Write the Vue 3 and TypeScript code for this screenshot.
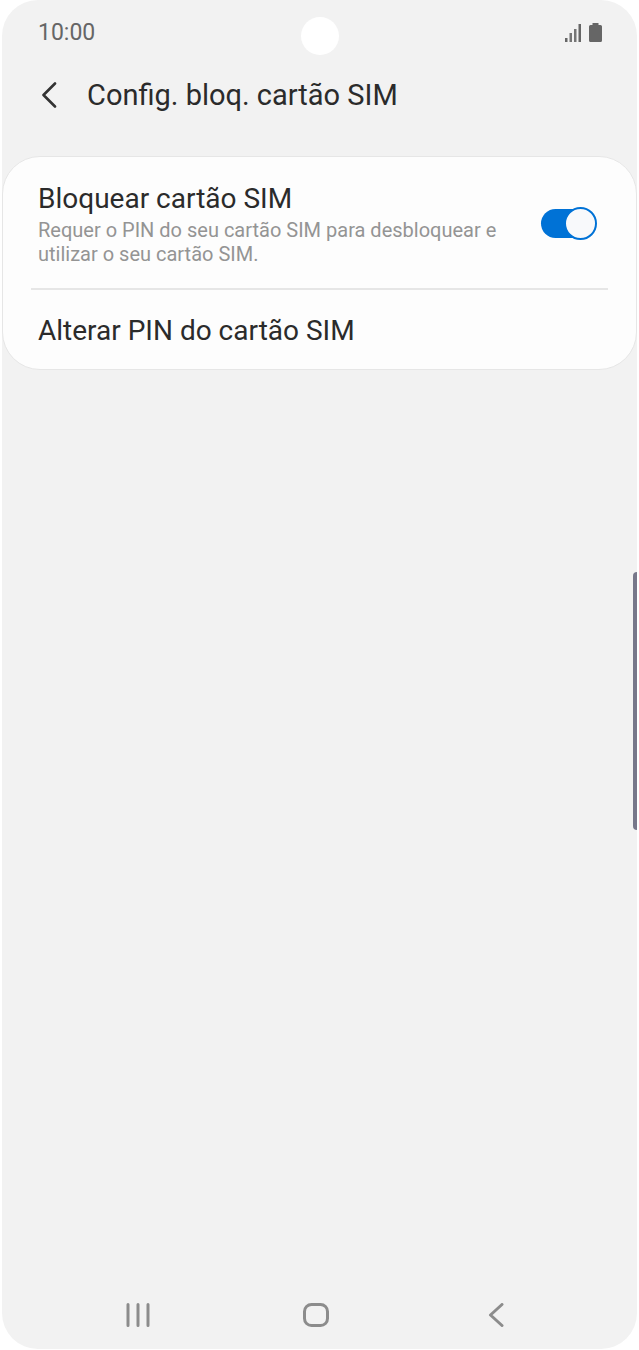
<script setup lang="ts">
const title = "Config. bloq. cartão SIM"
</script>

<template>
  <div class="screen">
    <header class="status-bar">
      <span class="clock">10:00</span>
      <span class="camera" />
      <span class="status-icons">
        <svg width="16" height="18" viewBox="0 0 16 18" class="signal">
          <rect x="0" y="14" width="2.500" height="4" fill="#666" />
          <rect x="4.500" y="9" width="2.500" height="9" fill="#757575" />
          <rect x="9" y="5" width="2.500" height="13" fill="#757575" />
          <rect x="13.500" y="0" width="2.500" height="18" fill="#666" />
        </svg>
        <svg width="13" height="19" viewBox="0 0 13 19" class="battery">
          <path d="M3.500 0h6v2h2a1.500 1.500 0 0 1 1.500 1.500V17.500a1.500 1.500 0 0 1-1.500 1.500H1.500A1.500 1.500 0 0 1 0 17.500V3.500A1.500 1.500 0 0 1 1.500 2h2z" fill="#666" />
        </svg>
      </span>
    </header>

    <div class="title-bar">
      <svg width="18" height="26" viewBox="0 0 18 26" class="back">
        <path d="M15 1.500 3.500 13 15 24.500" fill="none" stroke="#333" stroke-width="2.600" stroke-linecap="round" stroke-linejoin="round" />
      </svg>
      <h1>{{ title }}</h1>
    </div>

    <section class="card">
      <div class="row row-toggle">
        <div class="row-text">
          <div class="row-title">Bloquear cartão SIM</div>
          <div class="row-sub">Requer o PIN do seu cartão SIM para desbloquear e utilizar o seu cartão SIM.</div>
        </div>
        <div class="switch"><span class="knob" /></div>
      </div>
      <div class="divider" />
      <div class="row row-plain">
        <div class="row-title">Alterar PIN do cartão SIM</div>
      </div>
    </section>

    <div class="spacer" />

    <nav class="nav-bar">
      <svg width="24" height="24" viewBox="0 0 24 24">
        <path d="M2 1.500v21M12 1.500v21M22 1.500v21" stroke="#8c8c8c" stroke-width="3" stroke-linecap="round" fill="none" />
      </svg>
      <svg class="nav-home" width="26" height="24" viewBox="0 0 26 24">
        <rect x="1.500" y="1.500" width="23" height="21" rx="7" fill="none" stroke="#8c8c8c" stroke-width="3" />
      </svg>
      <svg class="nav-back" width="16" height="24" viewBox="0 0 16 24">
        <path d="M14 1.500 2.500 12 14 22.500" fill="none" stroke="#8c8c8c" stroke-width="3" stroke-linecap="round" stroke-linejoin="round" />
      </svg>
    </nav>

    <span class="side-key" />
  </div>
</template>

<style scoped>
.screen {
  position: relative;
  box-sizing: border-box;
  display: flex;
  flex-direction: column;
  width: 635px;
  height: 1349px;
  margin-left: 2px;
  border-radius: 36px;
  background: #f2f2f2;
  font-family: Roboto, "Noto Sans", sans-serif;
  overflow: hidden;
}
.status-bar {
  position: relative;
  display: flex;
  align-items: center;
  justify-content: space-between;
  height: 36px;
  margin-top: 14px;
  padding: 0 35px 0 36px;
}
.clock {
  color: #666;
  font-size: 23px;
}
.camera {
  position: absolute;
  left: 299px;
  top: 3px;
  width: 38px;
  height: 38px;
  border-radius: 50%;
  background: #fff;
}
.status-icons {
  display: flex;
  align-items: flex-end;
  gap: 8px;
}
.title-bar {
  display: flex;
  align-items: center;
  height: 46px;
  margin-top: 22px;
  padding-left: 38px;
}
.back {
  flex: none;
}
.title-bar h1 {
  margin: 0 0 0 29px;
  color: #2b2b2b;
  font-size: 29px;
  font-weight: 400;
}
.card {
  box-sizing: border-box;
  margin-top: 38px;
  border: 1px solid #e6e6e6;
  border-radius: 38px;
  background: #fdfdfd;
}
.row {
  display: flex;
  align-items: center;
  padding: 0 40px 0 35px;
}
.row-toggle {
  height: 131px;
  padding-top: 1px;
  box-sizing: border-box;
  gap: 20px;
}
.row-plain {
  height: 79px;
  padding-top: 2px;
  box-sizing: border-box;
}
.row-text {
  flex: 1;
}
.row-title {
  color: #2b2b2b;
  font-size: 28px;
  line-height: 36px;
}
.row-sub {
  margin-top: 1px;
  color: #949494;
  font-size: 20px;
  line-height: 24px;
}
.switch {
  position: relative;
  flex: none;
  width: 55px;
  height: 29px;
  border-radius: 15px;
  background: #0072d6;
}
.knob {
  position: absolute;
  right: -1px;
  top: -2px;
  box-sizing: border-box;
  width: 33px;
  height: 33px;
  border: 2px solid #0072d6;
  border-radius: 50%;
  background: #f8f9fb;
}
.divider {
  height: 2px;
  margin: 0 28px;
  background: #e6e6e6;
}
.spacer {
  flex: 1;
}
.nav-bar {
  display: flex;
  align-items: center;
  height: 24px;
  margin-bottom: 22px;
  padding-left: 124px;
}
.nav-home {
  margin-left: 153px;
}
.nav-back {
  margin-left: 159px;
}
.side-key {
  position: absolute;
  right: 0;
  top: 572px;
  width: 4px;
  height: 258px;
  border-radius: 4px 0 0 4px;
  background: #77778a;
}
</style>

<style>
html, body { background: #fff; }
</style>
